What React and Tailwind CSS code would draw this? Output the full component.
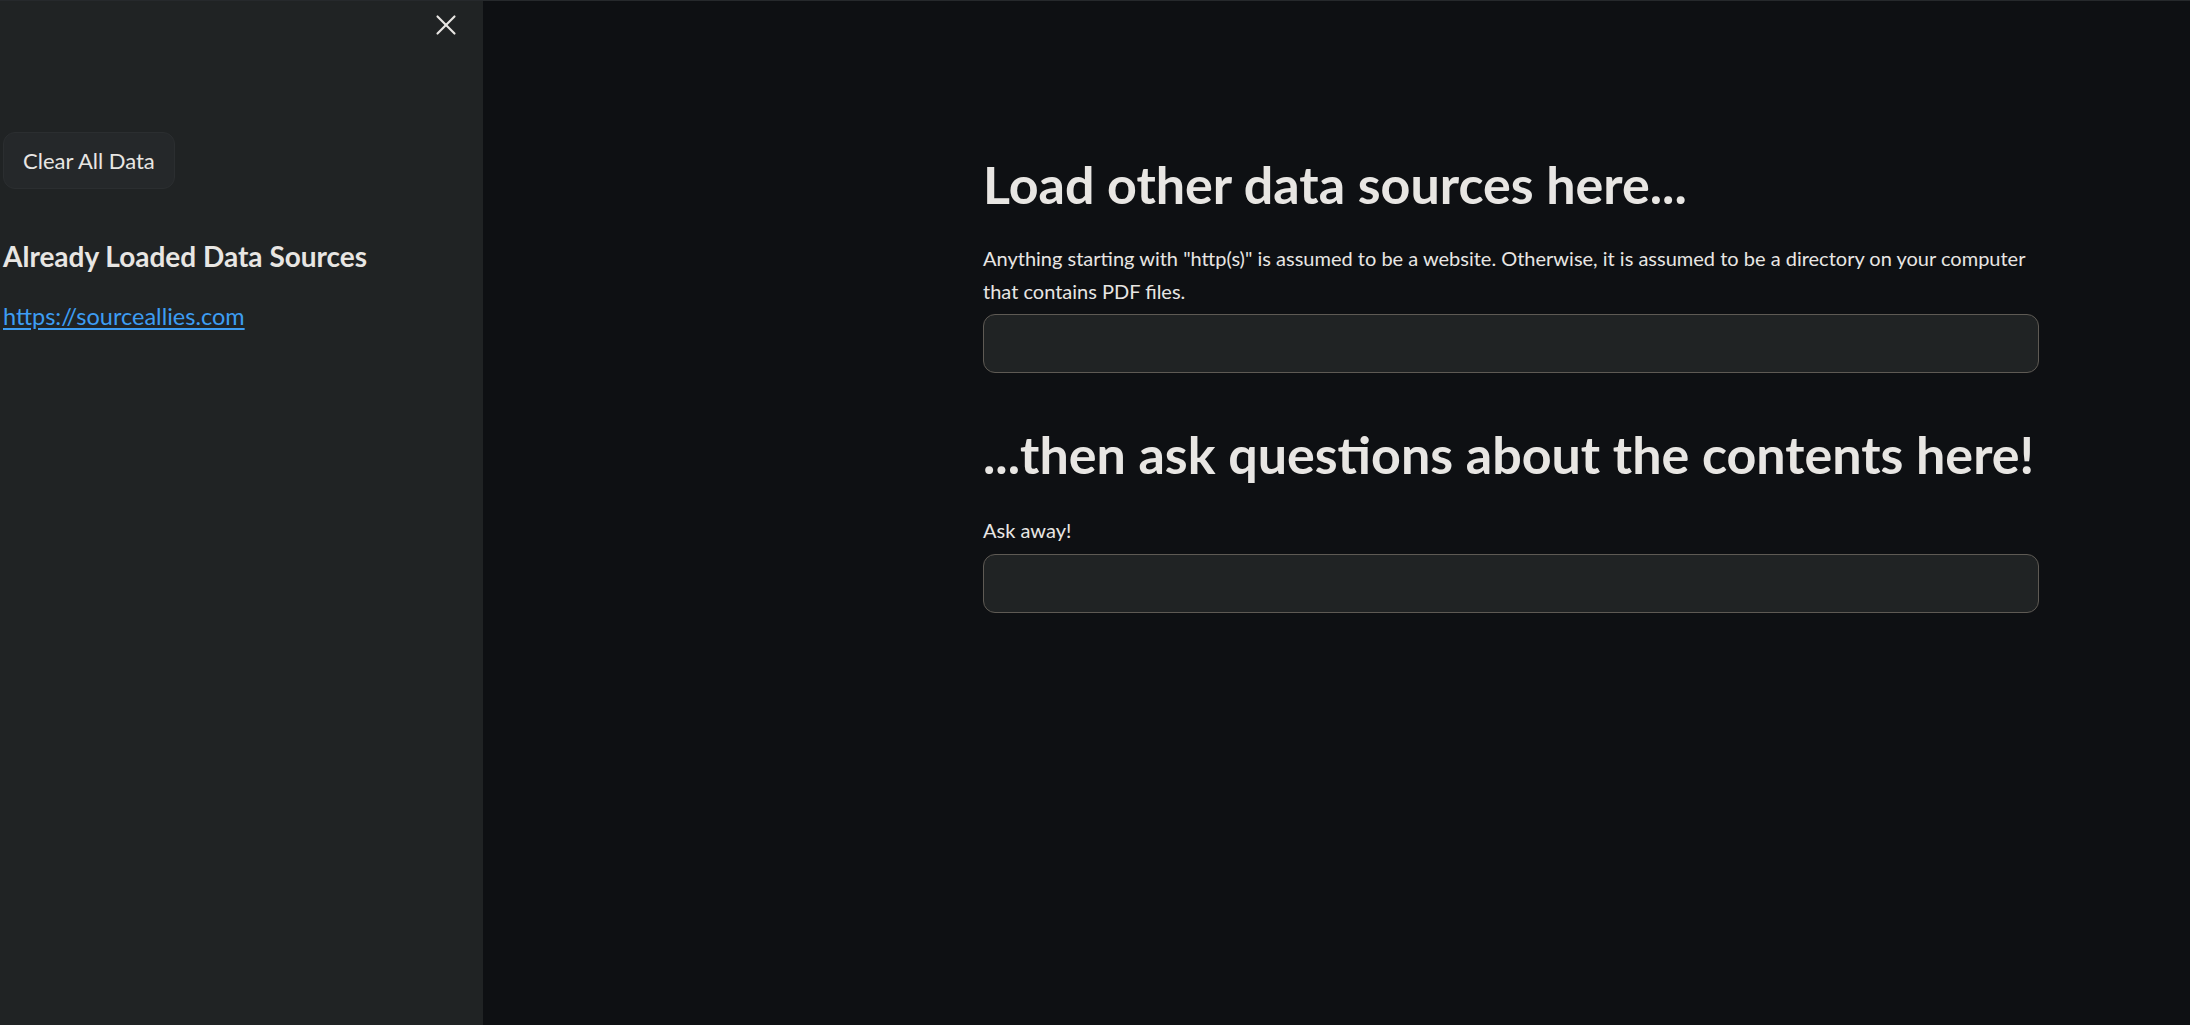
import { X } from 'lucide-react';

function TextBox() {
  return (
    <div className="h-[59px] w-full rounded-[12px] border border-[#5e5a54] bg-[#202324]" />
  );
}

export default function App() {
  return (
    <div className="flex h-[1025px] w-full overflow-hidden border-t border-[#26292c] bg-[#0e1013] font-['Lato',sans-serif] text-[#e8e6e3]">
      <aside className="relative h-full w-[483px] shrink-0 bg-[#202324] pl-[3px]">
        <button className="absolute left-[429px] top-[7px] text-[#e8e6e3]">
          <X size={34} strokeWidth={1.5} />
        </button>
        <div className="pt-[131px]">
          <button className="h-[57px] rounded-[12px] border border-[#2b2e30] bg-[#25282a] px-[19px] text-[22px] leading-none">
            Clear All Data
          </button>
        </div>
        <h3 className="mt-[51px] text-[28px] font-bold leading-[1.2]">Already Loaded Data Sources</h3>
        <a href="#" className="mt-[25px] block text-[23.5px] text-[#3d9df3] underline underline-offset-[3px]">
          https://sourceallies.com
        </a>
      </aside>

      <main className="flex-1">
        <div className="ml-[500px] w-[1056px] pt-[152px]">
          <h2 className="text-[52px] font-bold leading-[1.2]">Load other data sources here...</h2>
          <p className="mt-[27px] text-[20px] leading-[33px]">
            Anything starting with "http(s)" is assumed to be a website. Otherwise, it is assumed to be a directory on your computer that contains PDF files.
          </p>
          <div className="mt-[6px]">
            <TextBox />
          </div>
          <h2 className="mt-[50px] text-[52px] font-bold leading-[1.2]">...then ask questions about the contents here!</h2>
          <p className="mt-[28px] text-[20px] leading-[33px]">Ask away!</p>
          <div className="mt-[7px]">
            <TextBox />
          </div>
        </div>
      </main>
    </div>
  );
}
